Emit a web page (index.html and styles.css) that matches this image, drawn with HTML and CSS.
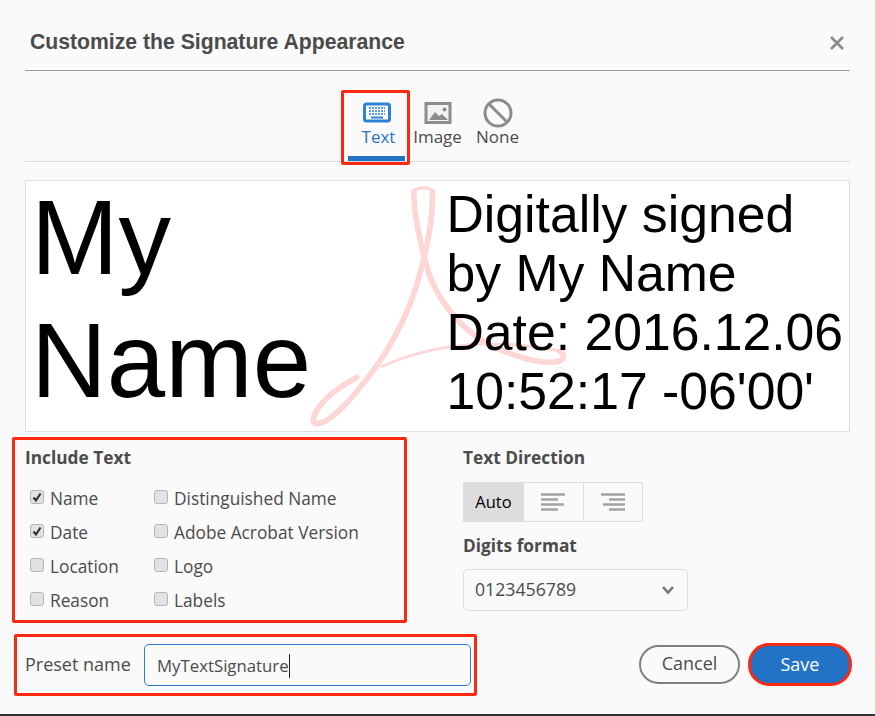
FILE: index.html
```html
<!DOCTYPE html>
<html lang="en">
<head>
<meta charset="utf-8">
<title>Customize the Signature Appearance</title>
<link rel="stylesheet" href="styles.css">
</head>
<body>
<div class="dialog">
  <header class="head">
    <h1 class="title">Customize the Signature Appearance</h1>
    <svg class="close" width="16" height="16" viewBox="0 0 16 16"><path d="M2 2 14 14M14 2 2 14" fill="none" stroke="#8a8a8a" stroke-width="2.6"/></svg>
  </header>
  <nav class="tabs">
    <div class="tab tab-active">
      <svg class="tab-icon icon-keys" width="30" height="24" viewBox="0 0 30 24">
        <rect x="2.5" y="3" width="25" height="17" rx="2" fill="#fff" stroke="#2f80d8" stroke-width="3"/>
        <path d="M7 7h16M7 10h16M7 13h16" stroke="#5c9ee3" stroke-width="2" stroke-dasharray="2 1"/>
        <path d="M9 16.5h12" stroke="#2f80d8" stroke-width="2"/>
      </svg>
      <span>Text</span>
      <i class="mark mark-tab"></i>
    </div>
    <div class="tab tab-image">
      <svg class="tab-icon icon-pic" width="30" height="24" viewBox="0 0 30 24">
        <rect x="3" y="2.5" width="24" height="19" fill="#f2f2f2" stroke="#8c8c8c" stroke-width="3"/>
        <path d="M6 19 12 11l4 4 3-2 6 6z" fill="#8c8c8c"/>
        <circle cx="21.5" cy="8.5" r="2" fill="#8c8c8c"/>
      </svg>
      <span>Image</span>
    </div>
    <div class="tab tab-none">
      <svg class="tab-icon icon-none" width="30" height="30" viewBox="0 0 30 30">
        <circle cx="15" cy="15" r="13" fill="none" stroke="#8c8c8c" stroke-width="3"/>
        <path d="M6 6 24 24" stroke="#8c8c8c" stroke-width="3"/>
      </svg>
      <span>None</span>
    </div>
  </nav>
  <section class="preview">
    <svg class="logo" width="300" height="252" viewBox="0 0 900 756">
      <g fill="none" stroke="#fdd6d6" stroke-linecap="round">
        <path d="M342 50C340 120 365 220 385 290C410 370 480 460 560 505C630 540 720 570 770 560C795 555 795 535 780 530" stroke-width="17"/>
        <path d="M397 50C400 130 380 230 350 330C320 430 260 540 190 625C140 690 80 750 50 745C30 745 40 710 80 670C110 640 140 625 170 607" stroke-width="17"/>
        <path d="M342 50C350 35 390 35 397 50" stroke-width="10"/>
        <path d="M245 575C320 540 420 515 520 508C620 503 720 515 790 530" stroke-width="8"/>
      </g>
      <circle cx="780" cy="590" r="14" fill="none" stroke="#fdd6d6" stroke-width="2"/>
    </svg>
    <div class="sig-name">My<br>Name</div>
    <div class="sig-info">Digitally signed<br>by My Name<br>Date: 2016.12.06<br>10:52:17 -06'00'</div>
  </section>
  <div class="options">
    <section class="include">
      <i class="mark mark-include"></i>
      <h2 class="label-head">Include Text</h2>
      <div class="checks">
        <label class="check"><span class="box"><svg width="14" height="14" viewBox="0 0 14 14"><path d="M3.5 7.5 6 10.5 10.5 3.5" fill="none" stroke="#333" stroke-width="2.2"/></svg></span>Name</label>
        <label class="check"><span class="box"></span>Distinguished Name</label>
        <label class="check"><span class="box"><svg width="14" height="14" viewBox="0 0 14 14"><path d="M3.5 7.5 6 10.5 10.5 3.5" fill="none" stroke="#333" stroke-width="2.2"/></svg></span>Date</label>
        <label class="check"><span class="box"></span>Adobe Acrobat Version</label>
        <label class="check"><span class="box"></span>Location</label>
        <label class="check"><span class="box"></span>Logo</label>
        <label class="check"><span class="box"></span>Reason</label>
        <label class="check"><span class="box"></span>Labels</label>
      </div>
    </section>
    <section class="direction">
      <h2 class="label-head">Text Direction</h2>
      <div class="segments">
        <div class="seg seg-on"><span class="seg-text">Auto</span></div>
        <div class="seg"><svg width="26" height="20" viewBox="0 0 26 20"><path d="M1 2.5h24M1 7.5h17M1 12.5h23M1 17.5h17" stroke="#a3a3a3" stroke-width="2.6"/></svg></div>
        <div class="seg"><svg width="26" height="20" viewBox="0 0 26 20"><path d="M1 2.5h24M9 7.5h16M3 12.5h22M9 17.5h16" stroke="#a3a3a3" stroke-width="2.6"/></svg></div>
      </div>
      <h2 class="label-head digits-head">Digits format</h2>
      <div class="select">
        <span class="select-text">0123456789</span>
        <svg width="14" height="10" viewBox="0 0 14 10"><path d="M2 2 7 7.5 12 2" fill="none" stroke="#777" stroke-width="2.6"/></svg>
      </div>
    </section>
  </div>
  <footer class="foot">
    <div class="preset">
      <i class="mark mark-preset"></i>
      <span class="preset-label">Preset name</span>
      <div class="input"><span class="caret">MyTextSignature</span></div>
    </div>
    <div class="actions">
      <button class="btn btn-cancel">Cancel</button>
      <button class="btn btn-save">Save</button>
    </div>
  </footer>
</div>
</body>
</html>
```
FILE: styles.css
```css
* { box-sizing: border-box; }
html, body { margin: 0; padding: 0; }
body { background: #fafafa; color: #4b4b4b; font-family: "Open Sans", "Noto Sans", sans-serif; font-size: 17.3px; }
.dialog { width: 875px; height: 716px; padding: 0 25px; border-bottom: 2px solid #333; overflow: hidden; }
.head { height: 71px; border-bottom: 1.5px solid #999; display: flex; align-items: flex-start; justify-content: space-between; padding: 30px 4px 0 5px; }
.title { margin: 0; font: bold 21.2px/24px "Liberation Sans", Arial, sans-serif; color: #4b4b4b; }
.close { margin-top: 5px; margin-right: 1px; }
.tabs { height: 91px; border-bottom: 1px solid #ddd; display: flex; justify-content: center; }
.tab { position: relative; display: flex; flex-direction: column; align-items: center; width: 60px; padding-top: 28px; color: #4b4b4b; line-height: 24px; font-size: 17px; }
.tab-icon { position: absolute; left: 50%; transform: translateX(-50%); }
.icon-keys { top: 30px; left: calc(50% + 1px); }
.icon-pic { top: 30px; }
.icon-none { top: 27px; }
.tab span { margin-top: 26px; }
.tab-active { color: #2d72c4; width: 57px; margin-right: 3px; padding-left: 5px; border-bottom: 5px solid #2272c6; }
.mark { position: absolute; border: 3px solid #fa2a12; border-radius: 2px; pointer-events: none; }
.mark-tab { left: -7px; right: -5px; top: 19px; bottom: -9px; }
.preview { position: relative; height: 252px; margin-top: 18px; background: #fff; border: 1px solid #ddd; display: flex; color: #000; font-family: "Liberation Sans", Arial, sans-serif; }
.logo { position: absolute; left: 274px; top: -6px; }
.sig-name { position: relative; width: 420.5px; margin-top: -4px; padding: 0 0 0 5px; font-size: 105px; line-height: 122.5px; }
.sig-info { position: relative; padding-top: 4px; font-size: 51.7px; line-height: 59px; white-space: nowrap; }
.options { display: grid; grid-template-columns: 438px 1fr; margin-top: 14px; }
.include { position: relative; }
.mark-include { left: -13px; top: -9px; width: 395px; height: 186px; }
.label-head { margin: 0; font-size: 17.3px; line-height: 24px; font-weight: 700; color: #4b4b4b; }
.checks { display: grid; grid-template-columns: 124px 1fr; grid-auto-rows: 34px; margin-top: 12px; padding-left: 5px; }
.check { display: flex; align-items: center; gap: 6px; padding-bottom: 2px; color: #4b4b4b; white-space: nowrap; }
.box { flex: none; width: 14px; height: 14px; margin-top: -2px; background: #e2e2e2; border: 1px solid #b5b5b5; border-radius: 3px; display: block; position: relative; }
.box svg { position: absolute; left: -1px; top: -1px; display: block; }
.segments { display: flex; margin-top: 12px; width: 180px; height: 40px; }
.seg { flex: 1; display: flex; align-items: center; justify-content: center; border: 1px solid #ddd; border-left: 0; color: #000; font-size: 16.5px; }
.seg svg { display: block; }
.seg-on { background: #ddd; flex: none; width: 61px; border: 0; padding-bottom: 2px; }
.digits-head { margin-top: 12px; }
.select { width: 225px; height: 42px; margin-top: 11px; padding: 0 12px 0 11px; display: flex; align-items: center; justify-content: space-between; border: 1px solid #ddd; border-radius: 5px; color: #4b4b4b; font-size: 17.7px; }
.select-text { margin-top: -2px; }
.foot { display: flex; justify-content: space-between; align-items: flex-start; margin-top: 25px; }
.preset { position: relative; display: flex; align-items: center; height: 43px; }
.mark-preset { left: -11px; top: -9px; width: 463px; height: 62px; }
.preset-label { width: 119px; margin-top: -1px; font-size: 18px; }
.input { width: 327px; height: 42px; margin-top: 1px; padding: 2px 0 0 12px; display: flex; align-items: center; border: 1px solid #2d7ad0; border-radius: 5px; font-size: 16.8px; }
.caret { border-right: 1px solid #222; line-height: 24px; }
.actions { display: flex; gap: 8px; align-items: center; height: 43px; margin-right: -2px; }
.btn { font: inherit; font-size: 18px; line-height: 24px; border-radius: 21px; padding: 0 0 2px; display: block; }
.btn-cancel { width: 101px; height: 39px; margin-top: -1px; background: #fafafa; color: #4b4b4b; border: 2px solid #808080; }
.btn-save { width: 104px; height: 43px; background: #2272c6; color: #fff; border: 3px solid #fa2a12; }
```
